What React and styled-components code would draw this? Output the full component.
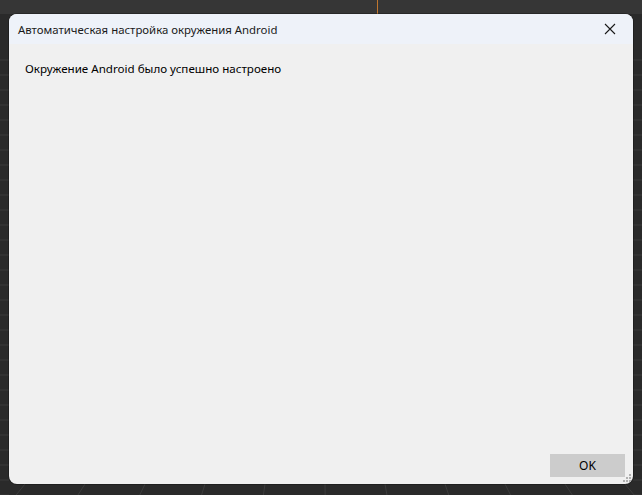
import React from 'react';
import styled, { createGlobalStyle } from 'styled-components';

const Global = createGlobalStyle`
  html, body { margin: 0; padding: 0; background: #2b2b2b; }
  body { font-family: "Noto Sans", "Open Sans", sans-serif; }
`;

const Desktop = styled.div`
  position: relative;
  width: 642px;
  height: 495px;
  overflow: hidden;
  background: #2a2a2a;
  padding: 14px 9px 11px 9px;
  box-sizing: border-box;
  display: flex;
`;

const Backdrop = styled.svg`
  position: absolute;
  inset: 0;
`;

const Window = styled.div`
  position: relative;
  flex: 1;
  display: flex;
  flex-direction: column;
  background: #f0f0f0;
  border-radius: 8px;
  overflow: hidden;
  box-shadow: 0 0 0 1px rgba(0, 0, 0, 0.25);
`;

const TitleBar = styled.div`
  height: 30px;
  flex: none;
  display: flex;
  align-items: center;
  justify-content: space-between;
  background: #eef2f9;
  padding-left: 9px;
  font-size: 11.4px;
  color: #1a1a1a;
`;

const CloseButton = styled.div`
  width: 46px;
  height: 30px;
  display: flex;
  align-items: center;
  justify-content: center;
`;

const Body = styled.div`
  flex: 1;
  display: flex;
  flex-direction: column;
  padding: 17px 16px 7px 16px;
  font-size: 11.6px;
  color: #000;
`;

const Message = styled.div`
  line-height: 16px;
`;

const Footer = styled.div`
  margin-top: auto;
  display: flex;
  justify-content: flex-end;
`;

const Button = styled.div`
  width: 75px;
  height: 23px;
  display: flex;
  align-items: center;
  justify-content: center;
  background: #cccccc;
  font-size: 12px;
  color: #000;
  margin-right: -8px;
`;

const Grip = styled.svg`
  position: absolute;
  right: 2px;
  bottom: 2px;
`;

export default function App() {
  const bottomLines = [25, 85, 145, 205, 265, 325, 385, 445, 505, 565, 625];
  return (
    <>
      <Global />
      <Desktop>
        <Backdrop width="642" height="495">
          <rect x="0" y="0" width="642" height="14" fill="#363636" />
          <rect x="377" y="0" width="1" height="14" fill="#c0762e" />
          {bottomLines.map((x, i) => (
            <line key={i} x1={x} y1="484" x2={x - (320 - x) * 0.03} y2="495" stroke="#3c3c3c" strokeWidth="1" />
          ))}
          {Array.from({ length: 30 }).map((_, i) => (
            <line key={'l' + i} x1="0" y1={60 + i * 15} x2="9" y2={60 + i * 15} stroke="#3a3a3a" />
          ))}
          {Array.from({ length: 30 }).map((_, i) => (
            <line key={'r' + i} x1="633" y1={60 + i * 15} x2="642" y2={60 + i * 15} stroke="#3a3a3a" />
          ))}
        </Backdrop>
        <Window>
          <TitleBar>
            <span>Автоматическая настройка окружения Android</span>
            <CloseButton>
              <svg width="12" height="12" viewBox="0 0 12 12">
                <path d="M1 1 L11 11 M11 1 L1 11" stroke="#1a1a1a" strokeWidth="1.1" fill="none" />
              </svg>
            </CloseButton>
          </TitleBar>
          <Body>
            <Message>Окружение Android было успешно настроено</Message>
            <Footer>
              <Button>OK</Button>
            </Footer>
          </Body>
          <Grip width="8" height="8" viewBox="0 0 8 8">
            <rect x="6" y="0" width="2" height="2" fill="#b0b0b0" />
            <rect x="3" y="3" width="2" height="2" fill="#b0b0b0" />
            <rect x="6" y="3" width="2" height="2" fill="#b0b0b0" />
            <rect x="0" y="6" width="2" height="2" fill="#b0b0b0" />
            <rect x="3" y="6" width="2" height="2" fill="#b0b0b0" />
            <rect x="6" y="6" width="2" height="2" fill="#b0b0b0" />
          </Grip>
        </Window>
      </Desktop>
    </>
  );
}
